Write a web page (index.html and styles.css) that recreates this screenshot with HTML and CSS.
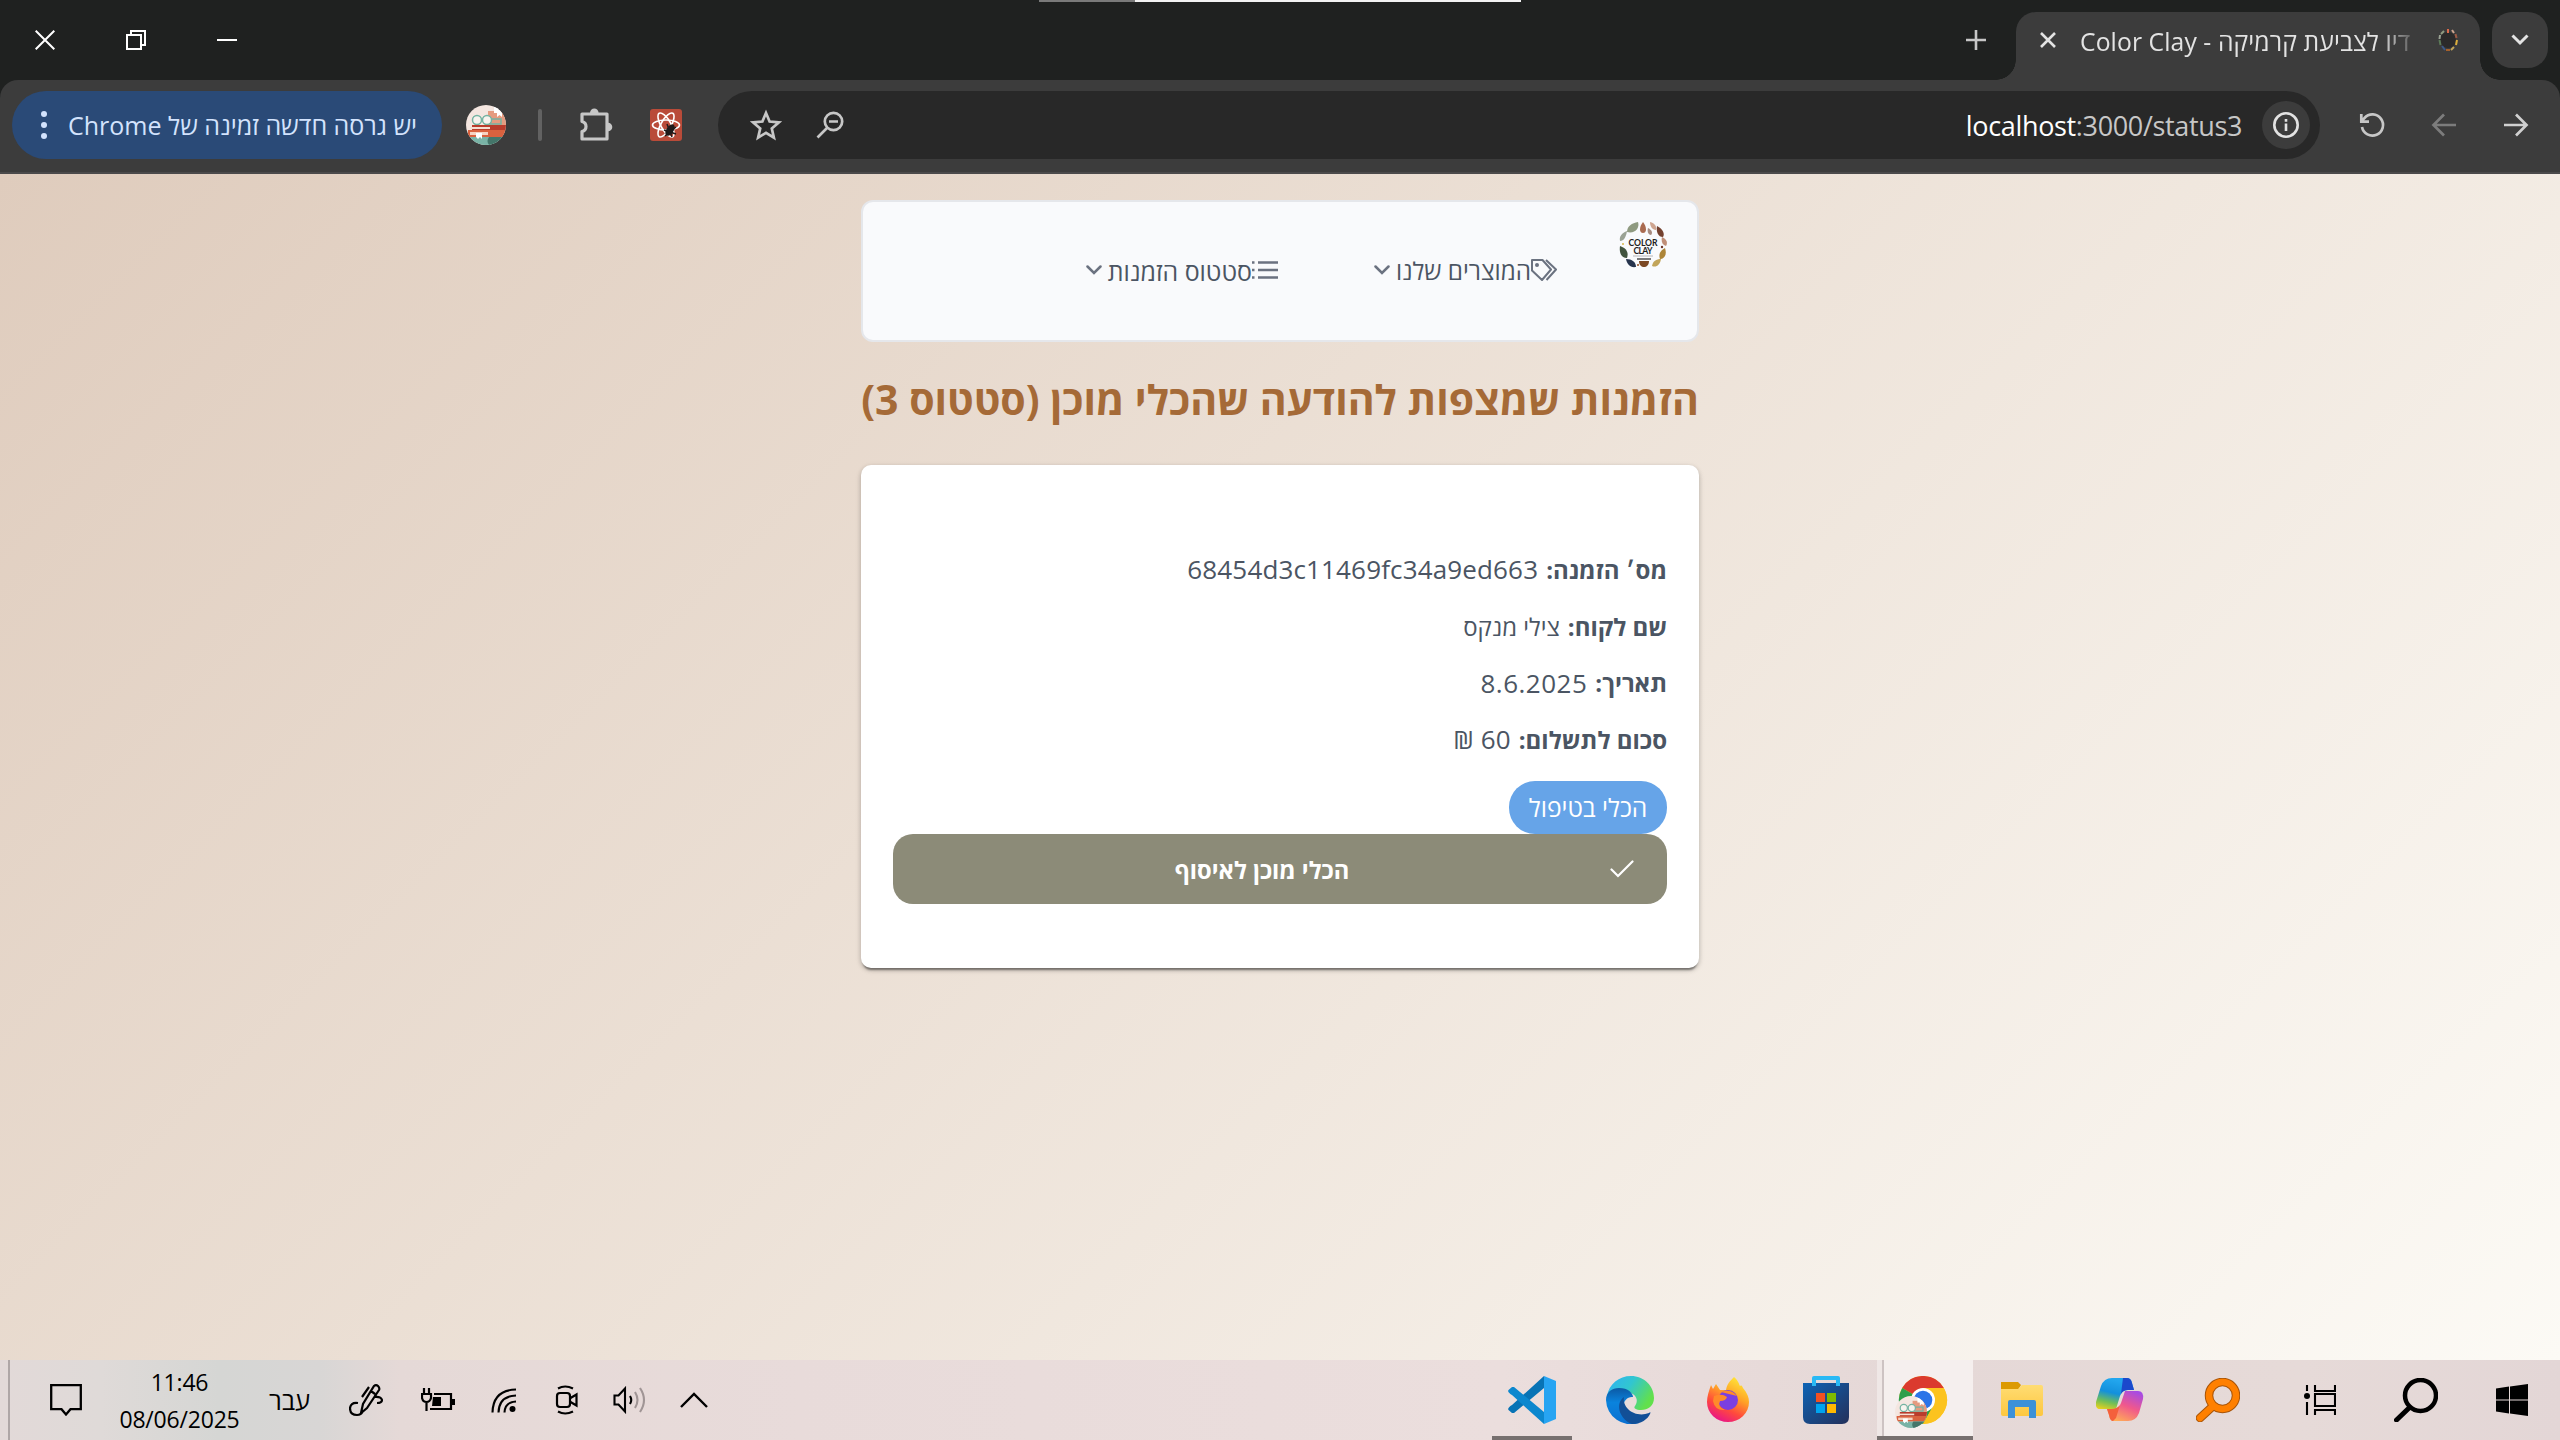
FILE: index.html
```html
<!DOCTYPE html>
<html lang="he">
<head>
<meta charset="utf-8">
<title>Color Clay</title>
<link rel="stylesheet" href="styles.css">
</head>
<body>
<svg width="0" height="0" class="defs">
  <defs>
    <clipPath id="round"><circle cx="20" cy="20" r="20"/></clipPath>
    <symbol id="books" viewBox="0 0 40 40">
      <g clip-path="url(#round)">
        <rect width="40" height="40" fill="#f4e6e0"/>
        <rect x="22" y="6" width="18" height="14" fill="#e59b80"/>
        <path d="M28 2h8v10l-2.500-2-2.500 2V8h-3z" fill="#fff"/>
        <circle cx="11" cy="15" r="4.500" fill="#f7f3ee" stroke="#74b3a2" stroke-width="1.500"/>
        <circle cx="21" cy="15" r="4.500" fill="#f7f3ee" stroke="#74b3a2" stroke-width="1.500"/>
        <path d="M26 14h9v5H24" fill="none" stroke="#74b3a2" stroke-width="1.500"/>
        <rect x="6" y="20" width="34" height="5" fill="#b93c2c"/>
        <rect x="4" y="22" width="20" height="2" fill="#f6ded2"/>
        <rect x="2" y="25" width="38" height="7" fill="#d9623f"/>
        <rect x="4" y="27" width="18" height="3" fill="#f6d3c2"/>
        <rect y="32" width="40" height="8" fill="#79b3a6"/>
        <path d="M23 32h17v8H23q-3-4 0-8z" fill="#44766a"/>
        <path d="M10 28h6v6l-2-2-2 2-2-2z" fill="#fff"/>
      </g>
    </symbol>
    <symbol id="clay" viewBox="0 0 48 48">
      <g>
        <path d="M19 1c2 6-3 12-11 10C8 5 13 2 19 1z" fill="#8f9a80"/>
        <path d="M24 1c4 5 4 11 0 11s-4-6 0-11z" fill="#a96a50"/>
        <path d="M31 1c5 1 7 5 6 8-4 0-6-4-6-8z" fill="#cfa590"/>
        <path d="M29 7c4 2 5 5 3 7-3 0-4-4-3-7z" fill="#a78b80"/>
        <path d="M38 5c6 3 8 8 6 11-5 0-7-5-6-11z" fill="#74412f"/>
        <path d="M43 16c5 2 6 6 4 9-4-1-5-5-4-9z" fill="#c08f78"/>
        <path d="M46 27c2 6 0 11-5 11-2-5 1-9 5-11z" fill="#ad8539"/>
        <path d="M42 38c-1 6-5 9-9 7 1-5 4-7 9-7z" fill="#c2a55a"/>
        <path d="M1 25c6 2 9 6 7 12-6 0-8-6-7-12z" fill="#42543f"/>
        <path d="M7 38c6 0 10 3 10 8-6 1-9-3-10-8z" fill="#26344d"/>
        <path d="M8 10c-1 6-3 10-7 10-1-5 2-8 7-10z" fill="#9aa294"/>
        <path d="M20 40h10c0 8-10 8-10 0z" fill="#7c4924"/>
        <path d="M18 38h14" stroke="#222" stroke-width="1.200"/>
        <circle cx="4" cy="23" r="1" fill="#d8b84c"/><circle cx="43" cy="26" r="1.200" fill="#6c3428"/><circle cx="19" cy="44" r="1" fill="#8f4d22"/>
      </g>
      <text x="24" y="24.500" text-anchor="middle" font-size="8.600" textLength="29" class="logo-word">COLOR</text>
      <text x="24" y="32.500" text-anchor="middle" font-size="8.600" textLength="19" class="logo-word">CLAY</text>
      <path d="M14 35h20" stroke="#8a8a8a" stroke-width=".6"/>
    </symbol>
    <linearGradient id="edgeA" x1="0" y1="0" x2="1" y2=".5"><stop offset="0" stop-color="#2fb0f5"/><stop offset=".5" stop-color="#31c6d0"/><stop offset="1" stop-color="#62e04c"/></linearGradient>
    <linearGradient id="edgeB" x1="0" y1="0" x2="0" y2="1"><stop offset="0" stop-color="#0c59a4"/><stop offset=".4" stop-color="#0a83dd"/><stop offset="1" stop-color="#0a6fd0"/></linearGradient>
    <linearGradient id="fox" x1=".8" y1="0" x2=".3" y2="1"><stop offset="0" stop-color="#ffee3a"/><stop offset=".4" stop-color="#ffa327"/><stop offset=".7" stop-color="#ff4a3c"/><stop offset="1" stop-color="#e8128b"/></linearGradient>
    <linearGradient id="store" x1="0" y1="0" x2="1" y2="1"><stop offset="0" stop-color="#0d63b5"/><stop offset="1" stop-color="#24305a"/></linearGradient>
    <linearGradient id="copA" x1=".3" y1="0" x2="0" y2="1"><stop offset="0" stop-color="#22a6ee"/><stop offset=".4" stop-color="#1390dc"/><stop offset=".7" stop-color="#6fbe58"/><stop offset="1" stop-color="#f8d414"/></linearGradient>
    <linearGradient id="copB" x1=".8" y1="0" x2=".3" y2="1"><stop offset="0" stop-color="#a44be6"/><stop offset=".5" stop-color="#f0588c"/><stop offset="1" stop-color="#ffab57"/></linearGradient>
    <linearGradient id="fold" x1="0" y1="0" x2="0" y2="1"><stop offset="0" stop-color="#ffdc73"/><stop offset="1" stop-color="#fdc73f"/></linearGradient>
  </defs>
</svg>

<div class="screen">
  <header class="browser">
    <div class="tabstrip">
      <div class="window-controls">
        <svg width="20" height="20" viewBox="0 0 20 20"><path d="M.7.700l18.600 18.600M19.300.700L.7 19.300" stroke="#fff" stroke-width="2"/></svg>
        <svg width="20" height="20" viewBox="0 0 20 20" fill="none" stroke="#fff" stroke-width="2"><path d="M1 5h14v14H1zM5 5V1h14v14h-4"/></svg>
        <svg width="20" height="20" viewBox="0 0 20 20"><path d="M0 10h20" stroke="#fff" stroke-width="2"/></svg>
      </div>
      <div class="load-line"></div>
      <div class="tabs">
        <svg class="new-tab" width="20" height="20" viewBox="0 0 20 20"><path d="M10 0v20M0 10h20" stroke="#c7c7c7" stroke-width="2.600"/></svg>
        <div class="tab">
          <svg width="16" height="16" viewBox="0 0 16 16"><path d="M1 1l14 14M15 1L1 15" stroke="#e3e3e3" stroke-width="2.600"/></svg>
          <div class="tab-title"><span class="t t-tab" dir="rtl">דיו לצביעת קרמיקה - Color Clay</span></div>
          <svg class="favicon" width="20" height="24" viewBox="0 0 20 24"><circle cx="10" cy="12" r="8" fill="#2b2a2a"/><g fill="none" stroke-width="2"><path d="M3 6l3-3" stroke="#8f9a80"/><path d="M10 1v4" stroke="#d9694a"/><path d="M14 2l2 3" stroke="#cfa590"/><path d="M17.500 6l1 4" stroke="#9c5a44"/><path d="M19 12l-1 5" stroke="#dcae3c"/><path d="M16 19l-3 3" stroke="#c2a55a"/><path d="M8 22h4" stroke="#a4602c"/><path d="M4 18l3 4" stroke="#3d5a88"/><path d="M1.500 12l1 5" stroke="#5c7a58"/><path d="M2 7l-.5 4" stroke="#9aa294"/></g></svg>
        </div>
        <div class="tab-search"><svg width="18" height="12" viewBox="0 0 18 12"><path d="M1.500 1.500L9 9l7.500-7.500" fill="none" stroke="#e3e3e3" stroke-width="3"/></svg></div>
      </div>
    </div>
    <div class="toolbar">
      <div class="update">
        <svg width="8" height="30" viewBox="0 0 8 30" fill="#d3e3fd"><circle cx="4" cy="4" r="3"/><circle cx="4" cy="15" r="3"/><circle cx="4" cy="26" r="3"/></svg>
        <span class="t t-update" dir="rtl">יש גרסה חדשה זמינה של Chrome</span>
      </div>
      <svg class="avatar" width="40" height="40"><use href="#books"/></svg>
      <div class="divider"></div>
      <svg class="puzzle" width="34" height="34" viewBox="0 0 34 34"><path d="M3 6h25v25H3v-7.500q4-1 4-5T3 13.500z" fill="none" stroke="#c7c7c7" stroke-width="3.200" stroke-linejoin="round"/><path d="M11 5a4.300 4.500 0 0 1 8.600 0zM29 14.700a4.300 4.300 0 0 1 0 8.600z" fill="#c7c7c7"/></svg>
      <svg class="ext" width="32" height="32" viewBox="0 0 32 32"><rect width="32" height="32" rx="3" fill="#b94b39"/><g fill="none" stroke="#fff" stroke-width="1.600"><ellipse cx="16" cy="16" rx="13.500" ry="5"/><ellipse cx="16" cy="16" rx="13.500" ry="5" transform="rotate(60 16 16)"/><ellipse cx="16" cy="16" rx="13.500" ry="5" transform="rotate(120 16 16)"/></g><ellipse cx="20" cy="21" rx="3.500" ry="6.500" transform="rotate(35 20 21)" fill="#1f1a1a"/><path d="M14 21l12 4M17 15l5 13M15 27l11-9" stroke="#1f1a1a" stroke-width="1.500"/></svg>
      <div class="omnibox">
        <svg class="star" width="32" height="32" viewBox="0 0 32 32"><path d="M16 4l3.600 8.600 9.200.8-7 6.100 2.100 9.100L16 23.800l-7.900 4.800 2.100-9.100-7-6.100 9.200-.8z" fill="none" stroke="#c7c7c7" stroke-width="2.700"/></svg>
        <svg class="zoomout" width="28" height="28" viewBox="0 0 28 28" fill="none" stroke="#c7c7c7" stroke-width="2.700"><circle cx="17.500" cy="10.500" r="8.700"/><path d="M11.500 16.500L1.500 26.500M13 10.500h9"/></svg>
        <span class="t t-url" dir="ltr"><b>localhost</b>:3000/status3</span>
        <div class="info"><svg width="28" height="28" viewBox="0 0 28 28"><circle cx="14" cy="14" r="11.700" fill="none" stroke="#e3e3e3" stroke-width="2.600"/><path d="M14 12.500v7.500M14 8v2.800" stroke="#e3e3e3" stroke-width="2.600"/></svg></div>
      </div>
      <svg class="nav-i reload" width="28" height="28" viewBox="0 0 28 28" fill="none" stroke="#c7c7c7" stroke-width="2.700"><path d="M4 16a10.600 10.600 0 1 0 2.500-9L3.500 10M3.300 3v7.700H11"/></svg>
      <svg class="nav-i" width="28" height="28" viewBox="0 0 28 28" fill="none" stroke="#7c7c7c" stroke-width="2.700"><path d="M26 14H4M14 3.500L3.500 14 14 24.500"/></svg>
      <svg class="nav-i" width="28" height="28" viewBox="0 0 28 28" fill="none" stroke="#d0d0d0" stroke-width="2.700"><path d="M2 14h22M14 3.500L24.500 14 14 24.500"/></svg>
    </div>
  </header>

  <main class="page" dir="rtl">
    <div class="column">
      <nav class="menubar">
        <svg class="logo" width="48" height="48"><use href="#clay"/></svg>
        <div class="menu-item first">
          <svg width="26" height="22" viewBox="0 0 26 22" fill="none" stroke="#6b7280" stroke-width="2" stroke-linejoin="round"><path d="M1 1h10.500l8.500 9.500-9 10.500L1 11.500zM15 1l10 9.500L15.500 21"/><circle cx="6" cy="6" r="1" fill="#6b7280"/></svg>
          <span class="t t-m1">המוצרים שלנו</span>
          <svg class="chev" width="16" height="10" viewBox="0 0 16 10"><path d="M1.500 1.500L8 8l6.500-6.500" fill="none" stroke="#6b7280" stroke-width="2.500" stroke-linecap="round"/></svg>
        </div>
        <div class="menu-item">
          <svg width="26" height="20" viewBox="0 0 26 20" stroke="#6b7280" stroke-width="2.500"><path d="M6 2.500h20M6 10h20M6 17.500h20M0 2.500h2.500M0 10h2.500M0 17.500h2.500"/></svg>
          <span class="t t-m2">סטטוס הזמנות</span>
          <svg class="chev" width="16" height="10" viewBox="0 0 16 10"><path d="M1.500 1.500L8 8l6.500-6.500" fill="none" stroke="#6b7280" stroke-width="2.500" stroke-linecap="round"/></svg>
        </div>
      </nav>
      <h1><span class="t t-title">הזמנות שמצפות להודעה שהכלי מוכן (סטטוס 3)</span></h1>
      <section class="card">
        <p><b class="t">מס׳ הזמנה:</b><span class="t t-num">68454d3c11469fc34a9ed663</span></p>
        <p><b class="t">שם לקוח:</b><span class="t">צילי מנקס</span></p>
        <p><b class="t">תאריך:</b><span class="t t-num t-day">8.6.2025</span></p>
        <p><b class="t">סכום לתשלום:</b><span class="t t-num">60 ₪</span></p>
        <div class="tag"><span class="t">הכלי בטיפול</span></div>
        <button class="ready">
          <svg width="24" height="18" viewBox="0 0 24 18"><path d="M1.500 9.500l6.500 6.500L22.500 1.500" fill="none" stroke="#fff" stroke-width="2.200" stroke-linecap="round"/></svg>
          <span class="ready-label"><span class="t">הכלי מוכן לאיסוף</span></span>
        </button>
      </section>
    </div>
  </main>

  <footer class="taskbar">
    <div class="show-desktop"></div>
    <svg class="note" width="32" height="33" viewBox="0 0 32 33"><path d="M1.200 1.200h29.600v24H20.500L16 30.500l-4.500-5.300H1.200z" fill="none" stroke="#000" stroke-width="2.300"/></svg>
    <div class="clock"><span class="t t-time">11:46</span><span class="t t-date">08/06/2025</span></div>
    <span class="t t-lang">עבר</span>
    <svg class="pen" width="34" height="34" viewBox="0 0 34 34" fill="none" stroke="#000" stroke-width="2.200"><path d="M12 30l2-9L25 3q2-2 4 0t1 4L18 25z M22 8l4 3M20 4l-7 10M9 20q-7-1-8 5 0 7 7 7 4 0 6-4M25 14q7-1 8 3 0 3-5 3"/></svg>
    <svg class="batt" width="34" height="24" viewBox="0 0 34 24" fill="none" stroke="#000" stroke-width="2.200"><path d="M13 6h17v15H9"/><path d="M32.500 11v6" stroke-width="3"/><path d="M12 9h8v9h-9z" fill="#000" stroke="none"/><path d="M3 0v6M8 0v6M1 6h9v4q-1 4-4.500 4T1 10zM5.500 14v9"/></svg>
    <svg class="wifi" width="26" height="26" viewBox="0 0 26 26" fill="none" stroke="#000" stroke-width="2.100"><path d="M1.500 25.500Q2 3 25 2.500M7.500 25.500Q8 9 25 8.500M13.500 25.500Q14 15 25 14.500"/><circle cx="21.500" cy="22" r="3" fill="#000" stroke="none"/></svg>
    <svg class="cam" width="24" height="30" viewBox="0 0 24 30" fill="none" stroke="#000" stroke-width="2.200"><rect x="2" y="8" width="13" height="14" rx="3"/><path d="M15.500 13l6-3.500v11l-6-3.500M3 3.500q7-4 15 0M3 26.500q7 4 15 0"/></svg>
    <svg class="spk" width="34" height="28" viewBox="0 0 34 28" fill="none" stroke="#000" stroke-width="2.100"><path d="M1.500 9.500h4L12 2.500v23l-6.500-7h-4zM17 10q2.500 4 0 8"/><path d="M22 6q5 8 0 16M27 2q8 12 0 24" stroke="#a09595"/></svg>
    <svg class="up" width="28" height="16" viewBox="0 0 28 16"><path d="M1 15L14 2l13 13" fill="none" stroke="#000" stroke-width="2.400"/></svg>

    <div class="apps">
      <div class="app open"><svg width="48" height="48" viewBox="0 0 48 48"><path d="M36 0L4 29q-5 3-3.500 5L4 37h2L36 12z" fill="#0873b5"/><path d="M36 48L4 19q-5-3-3.500-5L4 11h2l30 25z" fill="#0c87ce"/><path d="M36 0l12 5v38l-12 5z" fill="#27a4f2"/></svg></div>
      <div class="app"><svg width="48" height="48" viewBox="0 0 48 48"><path d="M1 20C3 8 13 0 25 0c13 0 23 10 23 22 0 8-6 12-13 12-5 0-8-2-6-4 5-7-1-13-7-14C13 14 4 16 1 20z" fill="url(#edgeA)"/><path d="M0 24c0-8 6-12 13-12 9 0 14 5 14 9-7-1-12 7-8 14 2 7 8 11 14 12A25 25 0 0 1 0 24z" fill="url(#edgeB)"/><path d="M18 21c-9 6-5 22 8 27 9 0 16-5 18-10 1-2 0-2-1-1-13 5-27-4-25-16z" fill="#124f97"/></svg></div>
      <div class="app"><svg width="44" height="46" viewBox="0 0 44 46"><path d="M28 0c4 3 5 7 6 9 2-1 2 0 3 2 4 5 6 9 6 14a21 20 0 0 1-42 0C1 19 3 14 5 8l2 4 3-5 4 6h6C21 7 24 4 28 0z" fill="url(#fox)"/><circle cx="22" cy="23" r="10" fill="#7b3fe0"/><path d="M15 15q10-4 16 4l-4-1M8 19q8-3 13 1-1 4-7 4-3 6 5 9Q9 34 7 24z" fill="#ff8a2a"/></svg></div>
      <div class="app"><svg width="46" height="48" viewBox="0 0 46 48"><path d="M0 7h46v34q0 7-7 7H7q-7 0-7-7z" fill="url(#store)"/><path d="M11 10V2h24v8" fill="none" stroke="#29b9f5" stroke-width="4" stroke-linejoin="round"/><path d="M13 17h9v9h-9z" fill="#f25022"/><path d="M24 17h9v9h-9z" fill="#7fba00"/><path d="M13 28h9v9h-9z" fill="#00a4ef"/><path d="M24 28h9v9h-9z" fill="#ffb900"/></svg></div>
      <div class="app active"><svg width="56" height="52" viewBox="0 0 56 52"><circle cx="28" cy="24" r="24" fill="#fcc31e"/><path d="M28 24L7.200 12a24 24 0 0 1 41.600 0z" fill="#db3a2e"/><path d="M7.200 12A24 24 0 0 0 28 48l10-18-10-6z" fill="#2c9f4b"/><path d="M28 12h20.800A24 24 0 0 1 28 48l10.400-18z" fill="#fcc31e"/><circle cx="28" cy="24" r="12" fill="#fff"/><circle cx="28" cy="24" r="9.300" fill="#2b74e8"/><use href="#books" x="0" y="20" width="32" height="32"/></svg></div>
      <div class="app"><svg width="42" height="36" viewBox="0 0 42 36"><path d="M0 0h17l3 3-3 5H0z" fill="#dc9a02"/><path d="M0 7h17l4-4h19q2 0 2 2v27q0 2-2 2H2q-2 0-2-2z" fill="url(#fold)"/><path d="M7 36V20q0-2 2-2h24q2 0 2 2v16h-7V25H14v11z" fill="#3c91d8"/></svg></div>
      <div class="app"><svg width="48" height="44" viewBox="0 0 48 44"><path d="M16 0h15q4 0 5 5l2 7h-6q-6 0-8 6l-4 13H4q-5 0-4-7L5 8q3-8 11-8z" fill="url(#copA)"/><path d="M27 0h4q4 0 5 5l2 7h-6q-5 0-7 4z" fill="#1b49cc"/><path d="M32 43H18q-4 0-5-6l-2-6h5q7 0 9-6l4-12h13q6 0 5 8l-4 14q-3 8-11 8z" fill="url(#copB)"/><path d="M11 31h5q5 0 8-4l-4 13-3 3q-3 0-4-6z" fill="#f4603c"/></svg></div>
      <div class="app"><svg width="44" height="44" viewBox="0 0 44 44" fill="none" stroke-linecap="round"><g stroke="#a85408" stroke-width="8.500"><circle cx="26.500" cy="17.500" r="13.500"/><path d="M16 29L4 40"/></g><g stroke="#ff8000" stroke-width="6.500"><circle cx="26.500" cy="17.500" r="13.500"/><path d="M16 29L4 40"/></g></svg></div>
      <div class="app sys gap"><svg width="32" height="30" viewBox="0 0 32 30" fill="none" stroke="#000" stroke-width="2.100"><path d="M11 0v6h20V0M11 30v-5h20v5M11 9h20v12H11zM3 0v6M3 17v13"/><circle cx="3" cy="11" r="3" fill="#000" stroke="none"/></svg></div>
      <div class="app sys"><svg width="44" height="44" viewBox="0 0 44 44" fill="none" stroke="#000" stroke-linecap="round"><circle cx="26.500" cy="17.500" r="15.500" stroke-width="4.500"/><path d="M15 30L2.500 42" stroke-width="5"/></svg></div>
      <div class="app sys"><svg width="32" height="32" viewBox="0 0 32 32"><path d="M0 4.500l13-1.900V15.500H0zM14 2.400L32 0v15.500H14zM0 16.500h13v12.900L0 27.500zM14 16.500h18V32l-18-2.400z"/></svg></div>
    </div>
  </footer>
</div>
</body>
</html>
```
FILE: styles.css
```css
* { box-sizing: border-box; margin: 0; padding: 0; }
body { font-family: "Open Sans", "Liberation Sans", sans-serif; }
svg { display: block; flex: none; }
.defs { position: absolute; }
.t { white-space: nowrap; flex: none; }
.logo-word { font-family: Lato, sans-serif; font-weight: 700; fill: #222; }

.screen { width: 2560px; height: 1440px; display: flex; flex-direction: column; overflow: hidden; }

/* browser chrome */
.browser { height: 174px; background: #1f2120; flex: none; }
.tabstrip { height: 80px; display: flex; align-items: center; justify-content: space-between; }
.window-controls { display: flex; gap: 71px; padding-left: 35px; width: 1039px; }
.load-line { align-self: flex-start; width: 482px; height: 2px; background: linear-gradient(90deg, #7a7a7a 96px, #f2f2f2 96px); }
.tabs { display: flex; align-items: flex-end; height: 80px; flex: 1; padding-left: 445px; }
.new-tab { margin-bottom: 30px; }
.tab { position: relative; width: 464px; height: 68px; margin-left: 30px; padding: 0 22px 12px 24px; display: flex; align-items: center; background: #3c3c3c; border-radius: 20px 20px 0 0; }
.tab::before, .tab::after { content: ""; position: absolute; bottom: 0; width: 20px; height: 20px; }
.tab::before { left: -20px; background: radial-gradient(circle at 0 0, transparent 19.5px, #3c3c3c 20px); }
.tab::after { right: -20px; background: radial-gradient(circle at 100% 0, transparent 19.5px, #3c3c3c 20px); }
.tab-title { width: 336px; margin: 0 22px 0 24px; overflow: hidden; color: #e3e3e3; display: flex; -webkit-mask-image: linear-gradient(90deg, #000 300px, transparent 340px); mask-image: linear-gradient(90deg, #000 300px, transparent 340px); }
.t-tab { font-size: 24.700px; letter-spacing: .1px; padding-top: 2px; }
.tab-search { width: 56px; height: 56px; margin: 0 0 12px 12px; border-radius: 20px; background: #3c3c3c; display: grid; place-items: center; }
.toolbar { height: 94px; padding: 0 0 2px 12px; display: flex; align-items: center; background: #3c3c3c; border-bottom: 2px solid #4b4a4b; border-radius: 18px 18px 0 0; }
.update { width: 430px; height: 68px; border-radius: 34px; background: #2a4a77; display: flex; align-items: center; padding-left: 28px; gap: 20px; color: #d3e3fd; }
.t-update { font-size: 25px; }
.avatar { margin-left: 24px; }
.divider { width: 4px; height: 32px; margin: 0 37px 0 32px; background: #626262; border-radius: 2px; }
.ext { margin-left: 37px; }
.omnibox { width: 1602px; height: 68px; margin-left: 36px; padding: 0 10px 0 32px; border-radius: 34px; background: #282828; display: flex; align-items: center; }
.zoomout { margin-left: 34px; }
.t-url { margin-left: auto; font-size: 27px; letter-spacing: -.35px; color: #c7c7c7; }
.t-url b { font-weight: 400; color: #fff; }
.info { width: 48px; height: 48px; margin-left: 20px; border-radius: 50%; background: #3c3c3c; display: grid; place-items: center; }
.nav-i { margin-left: 44px; }
.reload { margin-left: 38px; }

/* page */
.page { height: 1186px; flex: none; background: linear-gradient(135deg, #dfccbd 0%, #fcfaf5 100%); display: flex; justify-content: center; padding-top: 26px; color: #4b5563; }
.column { width: 838px; }
.menubar { height: 142px; border: 2px solid #e5e7eb; border-radius: 12px; background: #f9fafc; display: flex; padding: 19px 30px 0; }
.menu-item { display: flex; align-items: center; height: 32px; margin-top: 33px; }
.first { margin: 33px 62px 0 96px; }
.chev { margin-right: 6px; }
.t-m1 { font-size: 24.300px; padding-top: 1px; }
.t-m2 { font-size: 24.900px; padding-top: 1px; }
h1 { height: 123px; padding-bottom: 9px; display: flex; align-items: center; justify-content: center; color: #a56a37; font-weight: 700; }
.t-title { font-size: 41px; }
.card { height: 503px; padding: 76px 32px 0; background: #fff; border-radius: 10px; box-shadow: 0 4px 2px -2px rgba(0,0,0,.4), 0 2px 4px rgba(0,0,0,.16), 0 2px 6px rgba(0,0,0,.12); }
.card p { height: 56.700px; display: flex; align-items: center; gap: 8px; font-size: 24px; }
.card .t-num { font-size: 26px; letter-spacing: .15px; }
.card .t-day { letter-spacing: .5px; }
.tag { width: 158px; height: 53px; margin-top: 13px; border-radius: 26px; background: #66a4e8; color: #fff; display: grid; place-items: center; font-size: 24.600px; }
.ready { width: 774px; height: 70px; border: 0; border-radius: 20px; background: #8c8b78; color: #fff; font-family: inherit; font-size: 23.700px; font-weight: 700; display: flex; align-items: center; padding: 0 33px; }
.ready-label { flex: 1; display: flex; justify-content: center; padding: 2px 12px 0 0; }

/* taskbar */
.taskbar { height: 80px; flex: none; display: flex; align-items: center; background: linear-gradient(90deg, #e2d9d8 0, #dfdad8 100px, #d5d6d4 220px, #d8d6d5 320px, #e5d9d7 400px, #e8dbda 800px, #ebdedd 1500px, #e5d8d7 1900px, #e6dad8 2300px, #e3d6d6 100%); }
.show-desktop { width: 2px; height: 80px; margin-left: 8px; background: #aea6a6; }
.note { margin-left: 40px; }
.clock { width: 123px; margin-left: 36px; padding-top: 2px; display: flex; flex-direction: column; align-items: center; font-size: 23px; letter-spacing: -.2px; line-height: 37px; }
.t-lang { margin-left: 28px; font-size: 25.500px; }
.pen { margin-left: 39px; }
.batt { margin-left: 38px; }
.wifi { margin-left: 36px; }
.cam { margin-left: 38px; }
.spk { margin-left: 34px; }
.up { margin-left: 33px; }
.apps { margin-left: auto; display: flex; }
.app { width: 98px; height: 80px; display: grid; place-items: center; }
.sys { width: 96px; }
.gap { margin-left: 5px; }
.open { background: linear-gradient(#77706f, #77706f) 9px 76px / 80px 4px no-repeat; }
.active { background: linear-gradient(#77706f, #77706f) 2px 76px / 96px 4px no-repeat, linear-gradient(90deg, transparent 2px, #efe7e6 2px 7px, #cdc3c3 7px 9px, #f5efee 9px); }
.active svg { margin: 4px 2px 0 0; }
```
